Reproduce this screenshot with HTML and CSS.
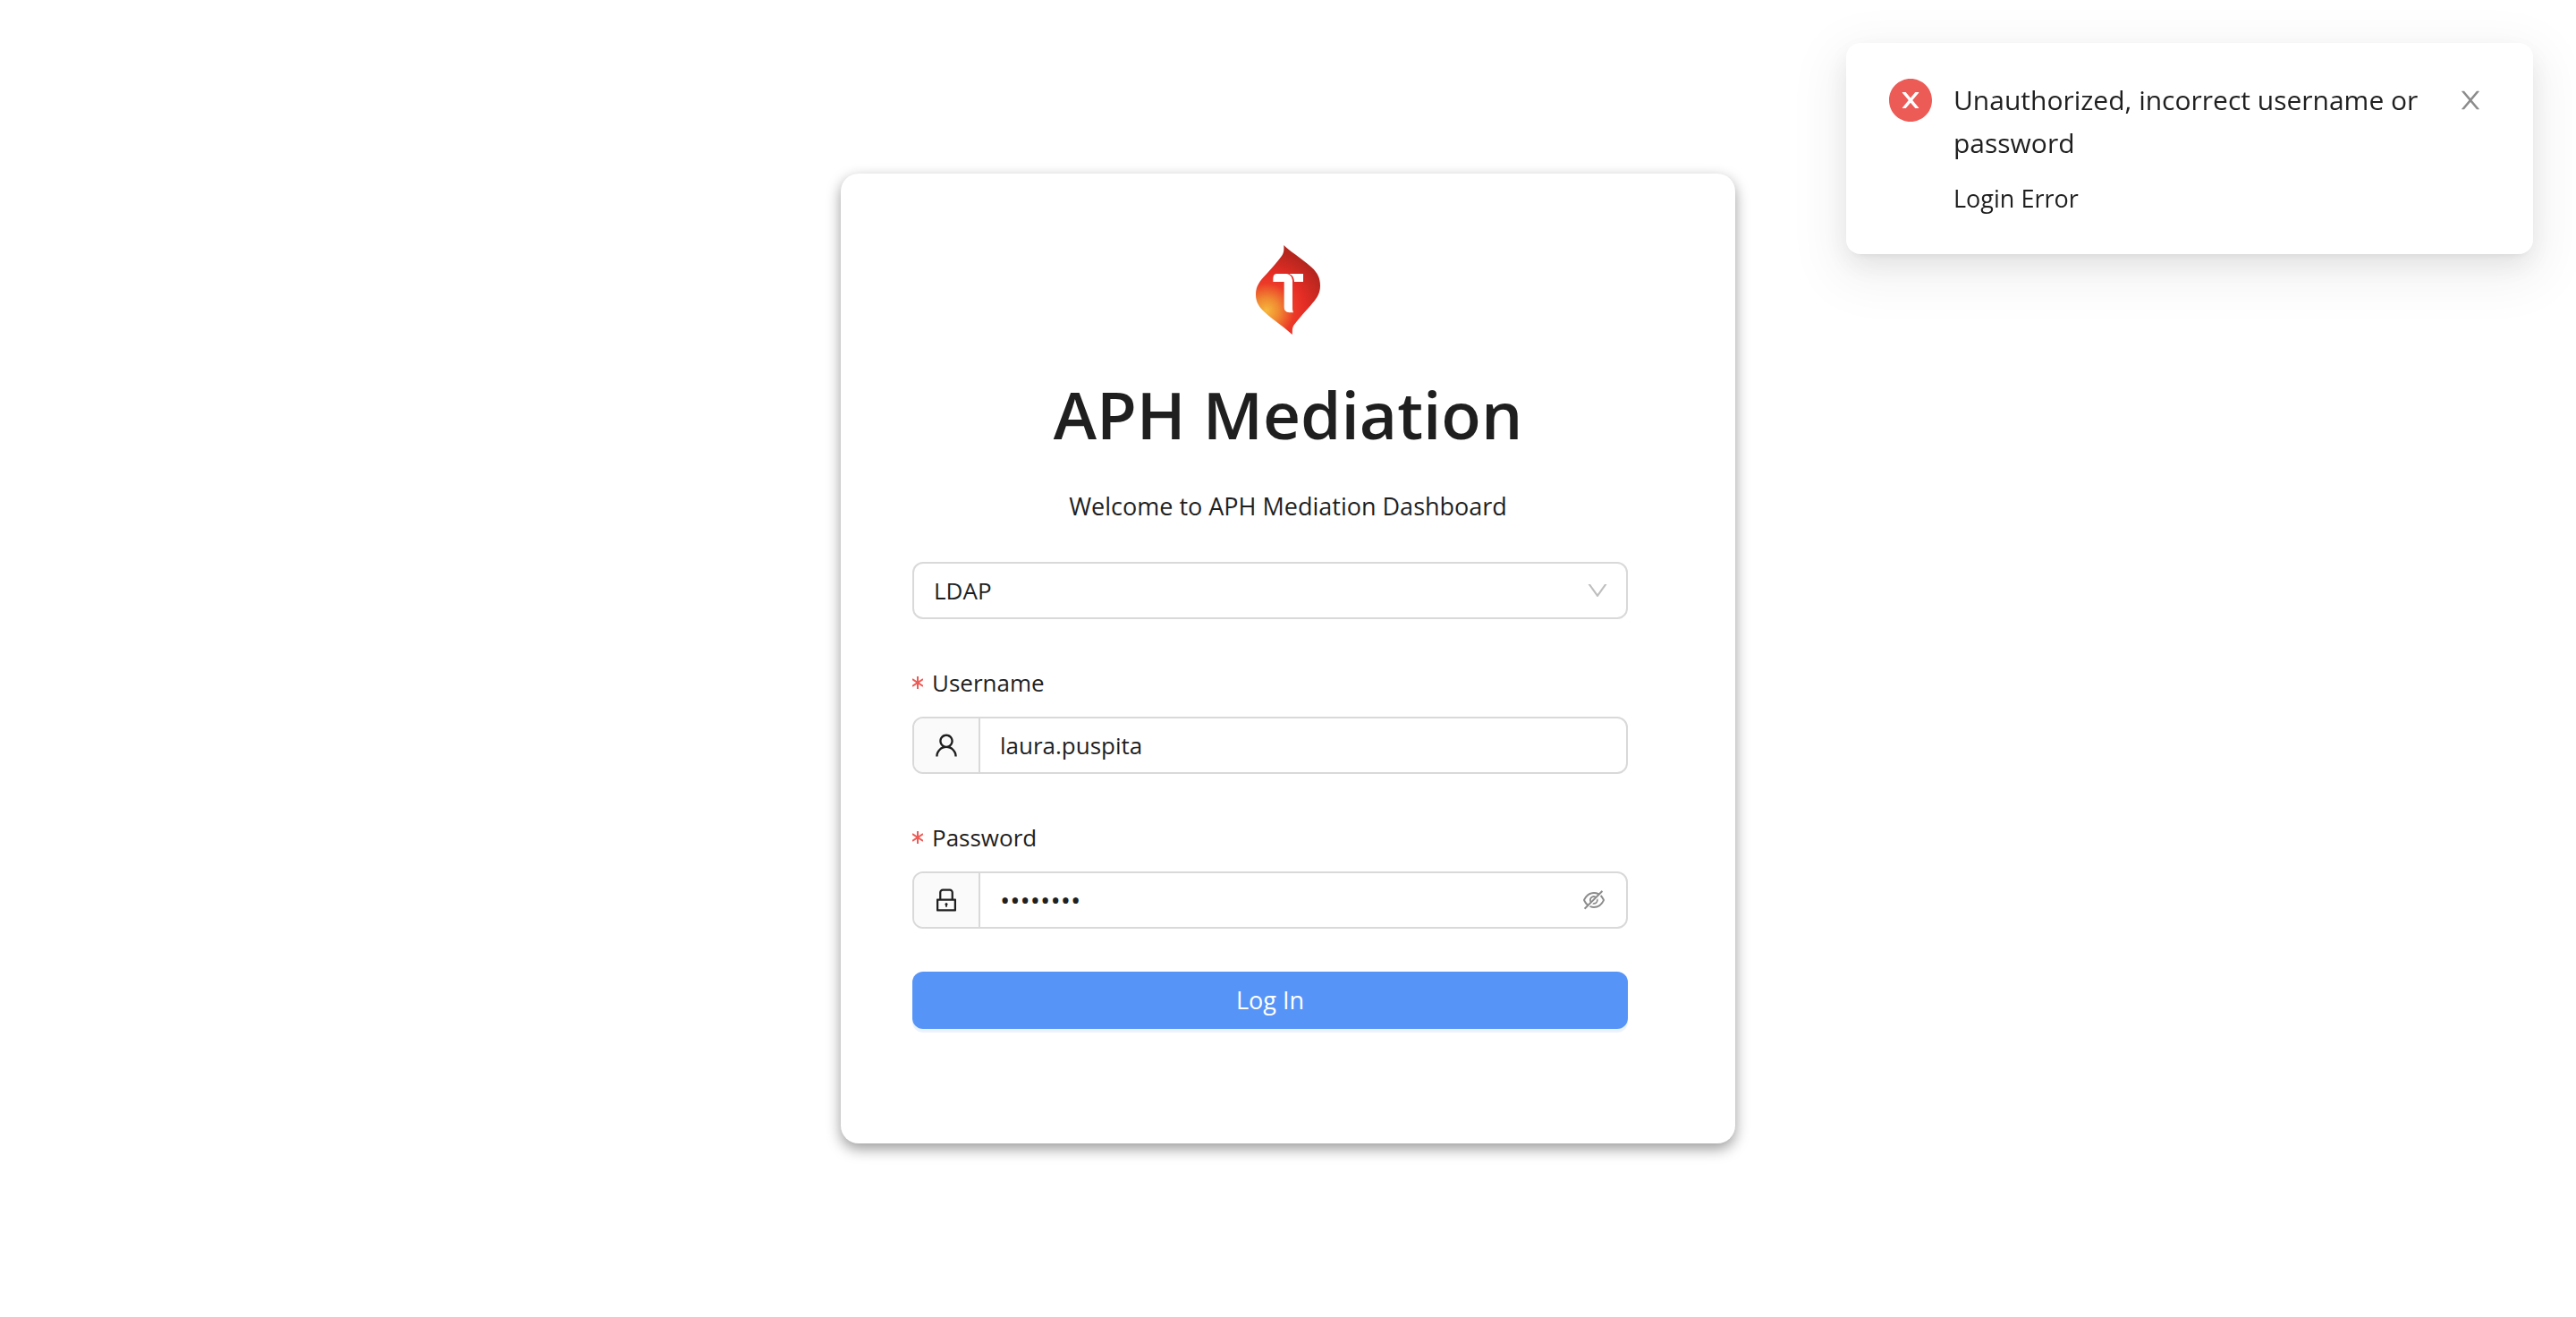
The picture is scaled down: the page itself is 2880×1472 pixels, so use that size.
FILE: index.html
```html
<!DOCTYPE html>
<html lang="en">
<head>
<meta charset="utf-8">
<meta name="viewport" content="width=device-width, initial-scale=1">
<title>APH Mediation</title>
<link rel="stylesheet" href="styles.css">
</head>
<body>
<main class="page">
  <section class="card">
    <header class="intro">
      <svg class="logo" viewBox="102 72 216 300" role="img" aria-label="Logo">
        <defs>
          <radialGradient id="flame" gradientUnits="userSpaceOnUse" cx="138" cy="292" r="205">
            <stop offset="0" stop-color="#f6b83c"/>
            <stop offset=".2" stop-color="#f08a32"/>
            <stop offset=".45" stop-color="#ec3a28"/>
            <stop offset=".62" stop-color="#e52d25"/>
            <stop offset="1" stop-color="#b5261e"/>
          </radialGradient>
        </defs>
        <path fill="url(#flame)" d="M196 72C212 90 250 112 290 147C310 165 318 185 318 208C318 235 306 252 285 275C262 301 240 325 230 340C222 352 226 362 224 372C205 352 165 327 132 297C112 279 102 262 102 238C102 210 115 193 135 172C155 150 180 122 191 105C198 92 196 82 196 72Z"/>
        <path fill="#fff" d="M173 168H205C216 169 224 178 225 190V286Q225 292 228 298H214Q197 297 197 280V195H160V184Q160 168 173 168Z"/>
        <path fill="#fff" d="M214 168H261V195H231C230 181 225 173 214 168Z"/>
      </svg>
      <h1 class="title">APH Mediation</h1>
      <p class="subtitle">Welcome to APH Mediation Dashboard</p>
    </header>
    <form class="form">
      <div class="control">
        <select class="input" aria-label="Login method"><option>LDAP</option></select>
        <svg class="icon icon-down" viewBox="0 0 1024 1024" aria-hidden="true"><path d="M884 256h-75c-5.1 0-9.9 2.5-12.9 6.6L512 654.2 227.9 262.6c-3-4.1-7.8-6.6-12.9-6.6h-75c-6.5 0-10.3 7.4-6.5 12.7l352.6 486.1c12.8 17.6 39 17.6 51.7 0l352.6-486.1c3.9-5.3.1-12.7-6.4-12.7z"/></svg>
      </div>
      <div class="field">
        <label class="label" for="username"><svg class="star" viewBox="0 0 12 14" aria-hidden="true"><path d="M6 0V14M0 3L12 11M12 3L0 11"/></svg>Username</label>
        <div class="control">
          <span class="addon"><svg class="icon" viewBox="0 0 1024 1024" aria-hidden="true"><path d="M858.5 763.6a374 374 0 00-80.6-119.5 375.63 375.63 0 00-119.5-80.6c-.4-.2-.8-.3-1.2-.5C719.5 518 760 444.7 760 362c0-137-111-248-248-248S264 225 264 362c0 82.7 40.5 156 102.8 201.1-.4.2-.8.3-1.2.5-44.8 18.9-85 46-119.5 80.6a375.63 375.63 0 00-80.6 119.5A371.7 371.7 0 00136 901.8a8 8 0 008 8.2h60c4.4 0 7.9-3.5 8-7.8 2-77.2 33-149.5 87.8-204.3 56.7-56.7 132-87.9 212.2-87.9s155.5 31.2 212.2 87.9C779 752.7 810 825 812 902.2c.1 4.4 3.6 7.8 8 7.8h60a8 8 0 008-8.2c-1-47.8-10.9-94.3-29.5-138.2zM512 534c-45.9 0-89.1-17.9-121.6-50.4S340 407.9 340 362c0-45.9 17.9-89.1 50.4-121.6S466.1 190 512 190s89.1 17.9 121.6 50.4S684 316.1 684 362c0 45.9-17.9 89.1-50.4 121.6S557.9 534 512 534z"/></svg></span>
          <input class="input" id="username" type="text" value="laura.puspita" required>
        </div>
      </div>
      <div class="field">
        <label class="label" for="password"><svg class="star" viewBox="0 0 12 14" aria-hidden="true"><path d="M6 0V14M0 3L12 11M12 3L0 11"/></svg>Password</label>
        <div class="control">
          <span class="addon"><svg class="icon" viewBox="0 0 1024 1024" aria-hidden="true"><path d="M832 464h-68V240c0-70.7-57.3-128-128-128H388c-70.7 0-128 57.3-128 128v224h-68c-17.7 0-32 14.3-32 32v384c0 17.7 14.3 32 32 32h640c17.7 0 32-14.3 32-32V496c0-17.7-14.3-32-32-32zM332 240c0-30.9 25.1-56 56-56h248c30.9 0 56 25.1 56 56v224H332V240zm460 600H232V536h560v304zM484 701v53c0 4.4 3.6 8 8 8h40c4.4 0 8-3.6 8-8v-53a48.01 48.01 0 10-56 0z"/></svg></span>
          <input class="input input-password" id="password" type="password" value="password" required>
          <button class="reveal" type="button" aria-label="Show password"><svg class="icon icon-eye" viewBox="0 0 1024 1024" aria-hidden="true"><path d="M942.2 486.2Q889.47 375.11 816.7 305l-50.88 50.88C807.31 395.53 843.45 447.4 874.7 512 791.5 684.2 673.4 766 512 766q-72.67 0-133.87-22.38L323 798.75Q408 838 512 838q288.3 0 430.2-300.3a60.29 60.29 0 000-51.5zm-63.57-320.64L836 122.88a8 8 0 00-11.32 0L715.31 232.2Q624.86 186 512 186q-288.3 0-430.2 300.3a60.3 60.3 0 000 51.5q56.69 119.4 136.5 191.41L112.48 835a8 8 0 000 11.31L155.17 889a8 8 0 0011.31 0l712.15-712.12a8 8 0 000-11.32zM149.3 512C232.6 339.8 350.7 258 512 258c54.54 0 104.13 9.36 149.12 28.39l-70.3 70.3a176 176 0 00-238.13 238.13l-83.42 83.42C223.1 637.49 183.3 582.28 149.3 512zm246.7 0a112.11 112.11 0 01146.2-106.69L401.31 546.2A112 112 0 01396 512z"/><path d="M508 624c-3.46 0-6.87-.16-10.25-.47l-52.82 52.82a176.09 176.09 0 00227.42-227.42l-52.82 52.82c.31 3.38.47 6.79.47 10.25a111.94 111.94 0 01-112 112z"/></svg></button>
        </div>
      </div>
      <button class="submit" type="submit">Log In</button>
    </form>
  </section>
</main>
<aside class="toast" role="alert">
  <svg class="icon toast-icon" viewBox="64 64 896 896" aria-hidden="true"><path d="M512 64C264.6 64 64 264.6 64 512s200.6 448 448 448 448-200.6 448-448S759.4 64 512 64zm165.4 618.2l-66-.3L512 563.4l-99.3 118.4-66.1.3c-4.4 0-8-3.5-8-8 0-1.9.7-3.7 1.9-5.2l130.1-155L340.5 359a8.32 8.32 0 01-1.9-5.2c0-4.4 3.6-8 8-8l66.1.3L512 464.6l99.3-118.4 66-.3c4.4 0 8 3.5 8 8 0 1.9-.7 3.7-1.9 5.2L553.5 514l130 155c1.2 1.5 1.9 3.3 1.9 5.2 0 4.4-3.6 8-8 8z"/></svg>
  <div class="toast-body">
    <p class="toast-title">Unauthorized, incorrect username or password</p>
    <p class="toast-text">Login Error</p>
  </div>
  <button class="close" type="button" aria-label="Close"><svg class="icon" viewBox="0 0 1024 1024" aria-hidden="true"><path d="M563.8 512l262.5-312.9c4.4-5.2.7-13.1-6.1-13.1h-79.8c-4.7 0-9.2 2.1-12.3 5.7L511.6 449.8 295.1 191.7c-3-3.6-7.5-5.7-12.3-5.7H203c-6.8 0-10.5 7.9-6.1 13.1L459.4 512 196.9 824.9A7.95 7.95 0 00203 838h79.8c4.7 0 9.2-2.1 12.3-5.7l216.5-258.1 216.5 258.1c3 3.6 7.5 5.7 12.3 5.7h79.8c6.8 0 10.5-7.9 6.1-13.1L563.8 512z"/></svg></button>
</aside>
</body>
</html>
```
FILE: styles.css
```css
*, *::before, *::after { box-sizing: border-box; }

body {
  margin: 0;
  background: #fff;
  color: #1f1f1f;
  font: 400 27px/44px "Open Sans", "Noto Sans", sans-serif;
}

h1, p { margin: 0; }

button, input, select { font: inherit; color: inherit; }

button { padding: 0; border: 0; background: none; cursor: pointer; }

.page {
  display: flex;
  align-items: center;
  justify-content: center;
  min-height: 100vh;
}

.card {
  width: 100%;
  max-width: 1000px;
  padding: 80px 80px 128px;
  border-radius: 20px;
  background: #fff;
  box-shadow: 0 6px 16px rgba(0, 0, 0, .4);
}

.intro {
  display: flex;
  flex-direction: column;
  align-items: center;
  text-align: center;
}

.logo { width: 72px; height: 100px; }

.title {
  margin-top: 40px;
  font-size: 73px;
  font-weight: 600;
  line-height: 98px;
}

.subtitle { margin: 32px 0 40px; }

.form {
  display: flex;
  flex-direction: column;
  gap: 48px;
  margin-right: 40px;
}

.label {
  display: flex;
  align-items: center;
  gap: 10px;
  margin-bottom: 15px;
  font-size: 26px;
  line-height: 46px;
}

.star {
  width: 12px;
  height: 14px;
  fill: none;
  stroke: #ed5b56;
  stroke-width: 2;
}

.icon { display: block; width: 32px; height: 32px; fill: currentColor; }

.control {
  display: flex;
  align-items: stretch;
  position: relative;
  height: 64px;
  border: 2px solid #d9d9d9;
  border-radius: 12px;
  overflow: hidden;
}

.addon {
  display: flex;
  align-items: center;
  padding: 0 20px;
  border-right: 2px solid #d9d9d9;
  background: #fafafa;
}

.input {
  flex: 1;
  min-width: 0;
  padding: 0 22px;
  border: 0;
  outline: 0;
  background: transparent;
  font-size: 26px;
  appearance: none;
}

.input-password { font-size: 30px; }

.icon-down {
  position: absolute;
  top: 16px;
  right: 18px;
  width: 28px;
  height: 28px;
  color: #bfbfbf;
  pointer-events: none;
}

.reveal { padding: 0 22px; color: #8c8c8c; }

.icon-eye { width: 28px; height: 28px; }

.submit {
  height: 64px;
  border-radius: 12px;
  background: #5794f7;
  box-shadow: 0 4px 0 #eaf3fe;
  color: #fff;
}

.toast {
  display: flex;
  align-items: flex-start;
  position: fixed;
  top: 48px;
  right: 48px;
  width: 768px;
  max-width: calc(100% - 96px);
  padding: 40px 48px;
  border-radius: 16px;
  background: #fff;
  box-shadow: 0 12px 32px rgba(0, 0, 0, .08), 0 6px 12px -8px rgba(0, 0, 0, .12), 0 18px 56px 16px rgba(0, 0, 0, .05);
}

.toast-icon { flex: none; width: 48px; height: 48px; color: #ed5b56; }

.toast-body { flex: 1; margin: 0 16px 0 24px; }

.toast-title { margin-bottom: 16px; font-size: 30px; line-height: 48px; }

.close { margin: 8px 6px 0 0; color: #8c8c8c; }
```
